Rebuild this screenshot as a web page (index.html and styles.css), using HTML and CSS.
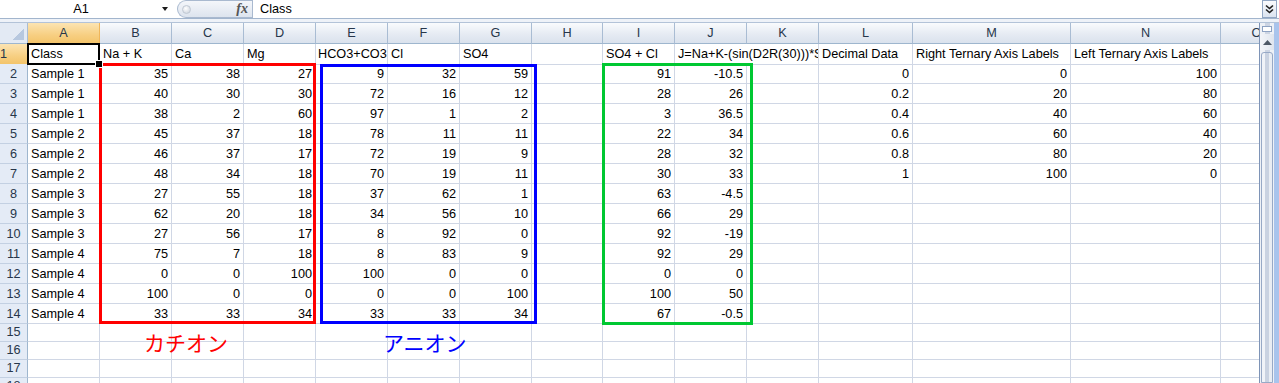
FILE: index.html
```html
<!DOCTYPE html>
<html lang="ja">
<head>
  <meta charset="UTF-8" />
  <title>Ternary Data Sheet</title>
  <link rel="stylesheet" href="styles.css">
</head>
<body>
  <div class="formula-bar">
    <div class="name-box">
      <span class="ref">A1</span>
      <span class="drop"></span>
    </div>
    <div class="fx-box">
      <span class="bead"></span>
      <span class="fx">fx</span>
    </div>
    <div class="formula">Class</div>
    <div class="expand">
      <svg width="9" height="10" viewBox="0 0 9 10"><path d="M1 1.5 L4.5 4.5 L8 1.5 M1 5.5 L4.5 8.5 L8 5.5" fill="none" stroke="#222" stroke-width="1.6"/></svg>
    </div>
  </div>
  <div class="bar-gap"></div>

  <div class="main">
    <div class="sheet">
      <div class="row head">
        <div class="corner"></div><div class="sel">A</div><div>B</div><div>C</div><div>D</div><div>E</div><div>F</div><div>G</div><div>H</div><div>I</div><div>J</div><div>K</div><div>L</div><div>M</div><div>N</div><div>O</div>
      </div>
      <div class="row labels">
        <div class="rh sel">1</div><div class="active">Class</div><div>Na + K</div><div>Ca</div><div>Mg</div><div class="fit">HCO3+CO3</div><div>Cl</div><div>SO4</div><div></div><div>SO4 + Cl</div><div class="spill">J=Na+K-(sin(D2R(30)))*SO4+Cl</div><div>Decimal Data</div><div>Right Ternary Axis Labels</div><div>Left Ternary Axis Labels</div><div></div>
      </div>
      <div class="row">
        <div class="rh">2</div><div class="t">Sample 1</div><div>35</div><div>38</div><div>27</div><div>9</div><div>32</div><div>59</div><div></div><div>91</div><div>-10.5</div><div></div><div>0</div><div>0</div><div>100</div><div></div>
      </div>
      <div class="row">
        <div class="rh">3</div><div class="t">Sample 1</div><div>40</div><div>30</div><div>30</div><div>72</div><div>16</div><div>12</div><div></div><div>28</div><div>26</div><div></div><div>0.2</div><div>20</div><div>80</div><div></div>
      </div>
      <div class="row">
        <div class="rh">4</div><div class="t">Sample 1</div><div>38</div><div>2</div><div>60</div><div>97</div><div>1</div><div>2</div><div></div><div>3</div><div>36.5</div><div></div><div>0.4</div><div>40</div><div>60</div><div></div>
      </div>
      <div class="row">
        <div class="rh">5</div><div class="t">Sample 2</div><div>45</div><div>37</div><div>18</div><div>78</div><div>11</div><div>11</div><div></div><div>22</div><div>34</div><div></div><div>0.6</div><div>60</div><div>40</div><div></div>
      </div>
      <div class="row">
        <div class="rh">6</div><div class="t">Sample 2</div><div>46</div><div>37</div><div>17</div><div>72</div><div>19</div><div>9</div><div></div><div>28</div><div>32</div><div></div><div>0.8</div><div>80</div><div>20</div><div></div>
      </div>
      <div class="row">
        <div class="rh">7</div><div class="t">Sample 2</div><div>48</div><div>34</div><div>18</div><div>70</div><div>19</div><div>11</div><div></div><div>30</div><div>33</div><div></div><div>1</div><div>100</div><div>0</div><div></div>
      </div>
      <div class="row">
        <div class="rh">8</div><div class="t">Sample 3</div><div>27</div><div>55</div><div>18</div><div>37</div><div>62</div><div>1</div><div></div><div>63</div><div>-4.5</div><div></div><div></div><div></div><div></div><div></div>
      </div>
      <div class="row">
        <div class="rh">9</div><div class="t">Sample 3</div><div>62</div><div>20</div><div>18</div><div>34</div><div>56</div><div>10</div><div></div><div>66</div><div>29</div><div></div><div></div><div></div><div></div><div></div>
      </div>
      <div class="row">
        <div class="rh">10</div><div class="t">Sample 3</div><div>27</div><div>56</div><div>17</div><div>8</div><div>92</div><div>0</div><div></div><div>92</div><div>-19</div><div></div><div></div><div></div><div></div><div></div>
      </div>
      <div class="row">
        <div class="rh">11</div><div class="t">Sample 4</div><div>75</div><div>7</div><div>18</div><div>8</div><div>83</div><div>9</div><div></div><div>92</div><div>29</div><div></div><div></div><div></div><div></div><div></div>
      </div>
      <div class="row">
        <div class="rh">12</div><div class="t">Sample 4</div><div>0</div><div>0</div><div>100</div><div>100</div><div>0</div><div>0</div><div></div><div>0</div><div>0</div><div></div><div></div><div></div><div></div><div></div>
      </div>
      <div class="row">
        <div class="rh">13</div><div class="t">Sample 4</div><div>100</div><div>0</div><div>0</div><div>0</div><div>0</div><div>100</div><div></div><div>100</div><div>50</div><div></div><div></div><div></div><div></div><div></div>
      </div>
      <div class="row">
        <div class="rh">14</div><div class="t">Sample 4</div><div>33</div><div>33</div><div>34</div><div>33</div><div>33</div><div>34</div><div></div><div>67</div><div>-0.5</div><div></div><div></div><div></div><div></div><div></div>
      </div>
      <div class="row short">
        <div class="rh">15</div><div></div><div></div><div></div><div></div><div></div><div></div><div></div><div></div><div></div><div></div><div></div><div></div><div></div><div></div><div></div>
      </div>
      <div class="row short">
        <div class="rh">16</div><div></div><div></div><div></div><div></div><div></div><div></div><div></div><div></div><div></div><div></div><div></div><div></div><div></div><div></div><div></div>
      </div>
      <div class="row short">
        <div class="rh">17</div><div></div><div></div><div></div><div></div><div></div><div></div><div></div><div></div><div></div><div></div><div></div><div></div><div></div><div></div><div></div>
      </div>
      <div class="row short">
        <div class="rh">18</div><div></div><div></div><div></div><div></div><div></div><div></div><div></div><div></div><div></div><div></div><div></div><div></div><div></div><div></div><div></div>
      </div>

      <!-- shapes drawn over the cells -->
      <div class="box cation"></div>
      <div class="box anion"></div>
      <div class="box sum"></div>
      <div class="label cation-label">カチオン</div>
      <div class="label anion-label">アニオン</div>
    </div>

    <div class="vscroll">
      <div class="split"></div>
      <div class="up-btn">
        <svg width="9" height="5" viewBox="0 0 9 5"><path d="M0 5 L4.5 0 L9 5 Z" fill="#4d5866"/></svg>
      </div>
      <div class="thumb"></div>
    </div>
  </div>
</body>
</html>
```

FILE: styles.css
```css
* {
  box-sizing: border-box;
}

body {
  margin: 0;
  height: 383px;
  overflow: hidden;
  font-family: "Liberation Sans", Arial, sans-serif;
  font-size: 12.7px;
  color: #000;
  background-color: #fff;
}

/* formula bar */
.formula-bar {
  display: flex;
  height: 19px;
  border-bottom: 1px solid #a2b5cd;
}

.name-box {
  width: 175px;
  display: flex;
  align-items: center;
}

.name-box .ref {
  flex: 1;
  text-align: center;
  line-height: 18px;
}

.name-box .drop {
  width: 0;
  height: 0;
  border-left: 3px solid transparent;
  border-right: 3px solid transparent;
  border-top: 4px solid #1b1b1b;
  margin-right: 7px;
}

.fx-box {
  width: 75px;
  margin-left: 2px;
  display: flex;
  align-items: center;
  justify-content: space-between;
  padding: 0 4px 0 4px;
  border: 1px solid #a9b9cf;
  border-right: none;
  border-radius: 9px 0 0 9px;
  background: linear-gradient(#f4f6fa, #dde4ee);
}

.fx-box .bead {
  width: 9px;
  height: 9px;
  border-radius: 50%;
  border: 1px solid #c0c8d3;
  background: radial-gradient(circle at 40% 35%, #ffffff, #c6ced9);
}

.fx-box .fx {
  font-family: "Liberation Serif", serif;
  font-style: italic;
  font-weight: bold;
  font-size: 14px;
  color: #555;
}

.formula {
  flex: 1;
  border-left: 1px solid #a9b9cf;
  padding-left: 7px;
  line-height: 18px;
}

.expand {
  width: 15px;
  margin-right: 2px;
  display: flex;
  align-items: center;
  justify-content: center;
  border: 1px solid #92a7c4;
  background: linear-gradient(#fbfcfe, #dbe4f0);
}

.bar-gap {
  height: 4px;
  background-color: #eef2f8;
  border-bottom: 1px solid #b3c3d8;
}

/* sheet */
.main {
  display: flex;
}

.sheet {
  position: relative;
  width: 1259px;
  overflow: hidden;
}

.row {
  display: grid;
  grid-template-columns: 28px repeat(7, 72px) 71px repeat(3, 72px) 94px 158px 150px 72px;
  height: 20px;
}

.row > div {
  padding: 0 3px;
  border-right: 1px solid #d0d7e5;
  border-bottom: 1px solid #d0d7e5;
  line-height: 20px;
  white-space: nowrap;
  overflow: hidden;
  text-align: right;
}

.row.short {
  height: 18px;
}

.row.short > div {
  line-height: 17px;
}

.row .t,
.row.labels > div {
  text-align: left;
}

.row.head {
  height: 21px;
}

.row.head > div {
  background: linear-gradient(#f9fbfd, #e6ebf3 55%, #dae2ed);
  border-right-color: #a9bcd3;
  border-bottom-color: #9eb6ce;
  text-align: center;
  line-height: 20px;
  color: #27364a;
}

.row > .rh {
  padding: 0;
  background-color: #e4ebf6;
  border-right-color: #9eb6ce;
  border-bottom-color: #c3d0e2;
  text-align: center;
  color: #27364a;
}

.row > .sel,
.row.head > .sel {
  background: linear-gradient(#fce4b2, #f7cf82 60%, #f3c46b);
  border-right-color: #f0b65a;
  border-bottom-color: #f0b65a;
}

.row.head > .corner {
  background: linear-gradient(135deg, transparent 50%, #b7c8df 50%) no-repeat right 3px bottom 3px / 11px 11px, #e3eaf4;
}

.row > .active {
  position: relative;
  overflow: visible;
}

.active::before {
  content: "";
  position: absolute;
  left: -1px;
  top: -1px;
  right: -1px;
  bottom: -1px;
  border: 2px solid #000;
}

.active::after {
  content: "";
  position: absolute;
  right: -4px;
  bottom: -4px;
  width: 6px;
  height: 6px;
  background-color: #000;
  border: 1px solid #fff;
  z-index: 3;
}

.row > .fit {
  padding-left: 2px;
  padding-right: 0;
}

.row > .spill {
  grid-column: span 2;
}

/* shapes */
.box {
  position: absolute;
  border: 3px solid;
  z-index: 2;
}

.box.cation {
  left: 99px;
  top: 40px;
  width: 217px;
  height: 261px;
  border-color: #ff0000;
}

.box.anion {
  left: 320px;
  top: 41px;
  width: 217px;
  height: 260px;
  border-color: #0000ff;
}

.box.sum {
  left: 602px;
  top: 40px;
  width: 151px;
  height: 262px;
  border-color: #00c832;
}

.label {
  position: absolute;
  top: 309px;
  font-family: "Noto Sans CJK JP", sans-serif;
  font-size: 21px;
  line-height: 21px;
  z-index: 2;
}

.cation-label {
  left: 144px;
  color: #ff0000;
}

.anion-label {
  left: 383px;
  color: #0000ff;
}

/* scrollbar */
.vscroll {
  width: 20px;
  height: 360px;
  display: flex;
  flex-direction: column;
  border-left: 1px solid #7e94b7;
  border-right: 5px solid #a9c4ec;
  background: linear-gradient(90deg, #eef1f6 0 5px, #cdd5e3 5px 10px, #eef1f6 10px);
}

.split {
  height: 6px;
  margin: 3px 2px 2px 2px;
  border: 1px solid #8ea3c3;
  background-color: #fff;
}

.up-btn {
  height: 16px;
  display: flex;
  align-items: center;
  justify-content: center;
  background: linear-gradient(90deg, #f3f5f9, #dfe5ee);
}

.thumb {
  flex: 1;
  margin: 2px 1px 0 1px;
  border: 1px solid #97a9c6;
  border-radius: 3px 3px 0 0;
  background: linear-gradient(90deg, #f0f3f8 0 35%, #c9d2e1 35% 75%, #e9edf3 75%);
}
```
